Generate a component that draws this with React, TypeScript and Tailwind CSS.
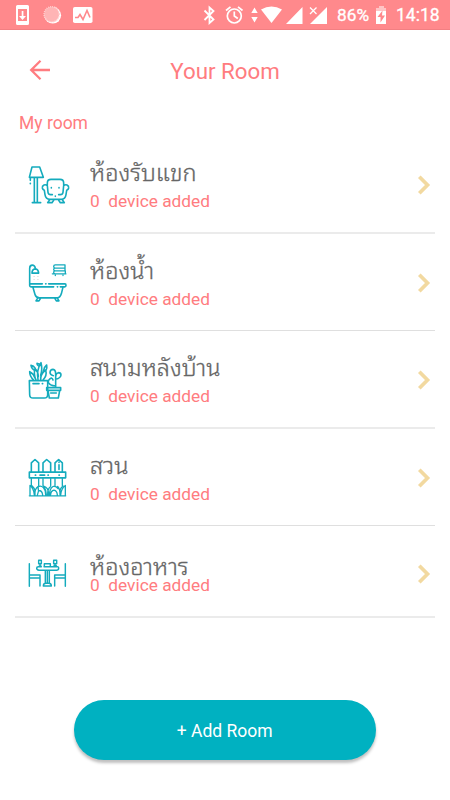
import React from "react";

function Art({ box = "0 0 210 180", children }: { box?: string; children: React.ReactNode }) {
  return (
    <svg viewBox={box} className="h-[60px] w-[70px] shrink-0" fill="none" stroke="#14abbd" strokeWidth="4.8" strokeLinejoin="round" strokeLinecap="round">
      {children}
    </svg>
  );
}

const LivingIcon = () => (
  <Art>
    <path d="M51 36h23l11 31H43zM46 69v7M46 85v1M58 69v73M67 69v73M52 143h25" />
    <path d="M97 90V84q0-11 11-11h27q11 0 11 11v6M97 92q-5-4-10-2-6 3-5 9 1 5 6 7l2 13q2 14 15 14h34q12 0 14-14l2-13q5-2 6-7 1-6-5-9-5-2-10 2M97 92l2 20q1 7 8 7h5M146 92l-2 20q-1 7-8 7h-5" />
    <path d="M109 98v1M132 98v1M121 123v1M103 136l-5 7h13l5-7M131 136l5 7h12l-5-7" />
  </Art>
);

const BathIcon = () => (
  <Art box="0 7.5 210 180">
    <path d="M44 99V54q0-10 8-10 7 0 9 9M51 68q0-12 10-13 9 1 10 13zM44 100h38M92 100h1M101 100h49q3 0 3 4t-3 5h-14M44 100v5q0 4 4 4h68M127 109h1M144 110l-5 20q-4 12-12 12H73q-10 0-13-10l-6-21M68 143l-5 8h9l5-8M119 143l5 8h8l-5-8" />
    <path d="M150 43h-29q-5 0-5 5t5 5h29M150 43v10M120 53q-4 0-4 4t5 4h29V53M120 61q-4 0-4 4t4 5h31V61M112 70h41M121 74v1M144 74v1" strokeWidth="4" />
    <path d="M56 78h3M67 78h3M56 87h3M67 87h3" stroke="#e5e5e5" strokeWidth="3" />
  </Art>
);

const PlantIcon = () => (
  <Art>
    <path d="M43 92h55v42q0 10-10 10H54q-10 0-10-10zM54 101h18M82 101h1M56 90q-12-11-12-25 12 6 16 19M63 90q-8-18-3-34 10 10 10 24M69 88q-5-27 9-50 5 20-1 38M77 90q-2-17 15-30 5 17-8 30M60 62q-10-5-12-16 8 1 13 9M72 49q-7-4-6-9 6 1 10 6M85 64q2-13 10-19 2 9-2 16" />
    <path d="M95 113h42v8H95zM99 122l4 22h27l4-22M107 129h17M122 112V72M115 77q-10-2-10-10 1-9 9-9 8 1 8 14M122 86q-1-16 8-18 8 0 8 7-1 9-16 13M120 107q-14 1-20-9-1-10 9-14 4 1 5 6" />
  </Art>
);

const GardenIcon = () => (
  <Art box="0 -7.5 210 180">
    <path d="M49 62V37l11-10 11 10v25M84 62V37l11-10 12 10v25M120 62V37l11-10 11 10v25M43 65h109v17H43zM61 74h1M75 74h14M99 74h1M132 74h1M132 43v14M132 35v1" />
    <path d="M49 84v21M71 84v21M84 84v21M107 84v21M120 84v21M142 84v21M43 136h109M45 136v-31q11 8 13 28M60 133q-2-17 9-25 4 13-2 26M51 106q8 7 9 16M65 112q10-10 20-1 7 7 7 22M71 120q11 0 12 14M94 133q0-14-8-26 15 4 15 26M107 108q-10 7-9 26M104 133q-1-18 10-25 8-3 15 6M107 132q1-11 10-13 9 2 10 14M128 108q8 9 7 24M151 136v-31q-12 8-14 28M144 106q-8 7-9 16" strokeWidth="4" />
  </Art>
);

const DiningIcon = () => (
  <Art>
    <path d="M43 56v68M43 90h32v33M45 99h29M151 56v68M151 90h-32v33M121 99h29M70 65q-5 0-5 5t7 6h52q7 0 7-6t-5-5h-18M87 65h19M79 65H70M91 79v35M103 79v35M97 79v35M85 123q0-8 8-8h8q8 0 8 8zM73 63h5M75 61v-5h-4V46h8v10h-4M117 62h7M120 61v-5h-4V46h9v10h-5M88 63v-7h18v7" strokeWidth="4.4" />
  </Art>
);

const rooms = [
  { name: "ห้องรับแขก", icon: <LivingIcon />, row: "h-[98px] border-b-2 border-[#ebebeb]" },
  { name: "ห้องน้ำ", icon: <BathIcon />, row: "h-[97px] border-b border-[#dfdfdf]" },
  { name: "สนามหลังบ้าน", icon: <PlantIcon />, row: "h-[98px] border-b-2 border-[#ebebeb]" },
  { name: "สวน", icon: <GardenIcon />, row: "h-[97px] border-b border-[#dfdfdf]" },
  { name: "ห้องอาหาร", icon: <DiningIcon />, row: "h-[92px] border-b-2 border-[#ebebeb]", tight: true },
];

function StatusBar() {
  return (
    <header className="flex h-[30px] shrink-0 items-center border-b border-[#f27f82] bg-[#ff898c] text-white">
      <svg viewBox="0 0 330 30" className="h-[30px] w-[330px] shrink-0" fill="white">
        <path fillRule="evenodd" d="M17.5 5h10q1.500 0 1.500 1.500v17q0 1.500-1.500 1.500h-10q-1.500 0-1.500-1.500v-17q0-1.500 1.500-1.500zM18 9v12h9V9z" />
        <path d="M21.700 11h1.700v5h2.600l-3.500 4-3.500-4h2.700z" />
        <circle cx="52.800" cy="15.300" r="8.300" />
        <circle cx="51.700" cy="14.300" r="7.600" fill="#ffb4b5" stroke="#ffd0d0" strokeWidth="1.500" strokeDasharray="1 1" />
        <rect x="73" y="7" width="19.500" height="16" rx="1.800" />
        <path d="M75 17.500h3l2-3 3 5 4-9 3 7" fill="none" stroke="#ff898c" strokeWidth="1.600" />
        <path d="m204.500 10.500 9 9-4 3.500V7.500l4 3.500-9 9" fill="none" stroke="white" strokeWidth="1.800" />
        <g fill="none" stroke="white" strokeWidth="1.700">
          <circle cx="234.300" cy="16" r="7" />
          <path d="M234.300 11.500V16l3.500 2.500M226 10.500l4.500-3.700M242.500 10.500 238 6.800" />
        </g>
        <path d="m254.500 7.500 3.200 5.500h-6.400zM254.500 22.500l3.200-5.500h-6.400zM261 9.500q10.500-6 21 0L271.500 23zM302.500 7v17H286zM327 7v17h-17z" />
        <path d="m308.500 6 9.500 9m0-9-9.500 9" stroke="#ff898c" strokeWidth="3.500" />
        <path d="m310 7.500 6.500 6.500m0-6.500-6.500 6.500" stroke="white" strokeWidth="1.300" />
      </svg>
      <span className="ml-[7px] w-[33px] whitespace-nowrap pt-[2px] text-[17.300px] leading-none [-webkit-text-stroke:0.300px_white]">86%</span>
      <svg viewBox="0 0 12 20" className="ml-[5px] h-5 w-3 shrink-0">
        <path d="M4 1h5v2h2v3H1V3h3z" fill="#ffc4c5" />
        <path d="M1 6h10v13H1z" fill="white" />
        <path d="m7.500 5.500-5 6.500h3v5.500l4.500-7H7z" fill="#ff898c" />
      </svg>
      <span className="ml-[9px] whitespace-nowrap pt-[2px] text-[17.500px] leading-none [-webkit-text-stroke:0.300px_white]">14:18</span>
    </header>
  );
}

export default function App() {
  return (
    <div className="flex h-[800px] w-[450px] flex-col overflow-hidden bg-white font-[Roboto,'Noto_Sans_Thai_Looped','Loma','Waree','Garuda','Noto_Serif_Thai',sans-serif] text-[#ff7c80]">
      <StatusBar />
      <div className="grid h-20 shrink-0 grid-cols-[60px_1fr_60px] items-center">
        <svg viewBox="0 0 22 22" className="ml-[29px] h-[22px] w-[22px]" fill="none" stroke="#ff7c80" strokeWidth="2.300">
          <path d="M21 11H2.500M11.500 1.700 2.200 11l9.300 9.300" />
        </svg>
        <h1 className="pt-[1px] text-center text-[22.300px] leading-7">Your Room</h1>
      </div>
      <h2 className="h-[26px] shrink-0 pl-[19px] pt-[1px] text-[17.500px] leading-6">My room</h2>
      <ul className="shrink-0 px-[15px]">
        {rooms.map((room) => (
          <li key={room.name} className={`flex ${room.row}`}>
            <div className="pt-[19px]">{room.icon}</div>
            <div className={`flex grow flex-col pl-[5px] ${room.tight ? "pt-[27px]" : "pt-[23px]"}`}>
              <span className={`text-[23.500px] font-light text-[#666] [-webkit-text-stroke:0.300px_#666] ${room.tight ? "h-[22px] leading-7" : "h-[32px] leading-7"}`}>{room.name}</span>
              <span className="whitespace-pre text-[17.300px] leading-5">0  device added</span>
            </div>
            <svg viewBox="0 0 14 20" className={`mr-[4px] h-5 w-3.5 ${room.tight ? "mt-[37.500px]" : "mt-[39px]"}`} fill="none" stroke="#f2d9a0" strokeWidth="3.700">
              <path d="m2.300 1.800 8.200 8.200-8.200 8.200" />
            </svg>
          </li>
        ))}
      </ul>
      <button className="ml-[74px] mt-[82px] h-[60px] w-[301.500px] shrink-0 rounded-full bg-[#00b1c1] pt-[2px] text-[17.500px] text-white shadow-[0_3px_3px_rgba(0,0,0,0.25)]">+ Add Room</button>
    </div>
  );
}
